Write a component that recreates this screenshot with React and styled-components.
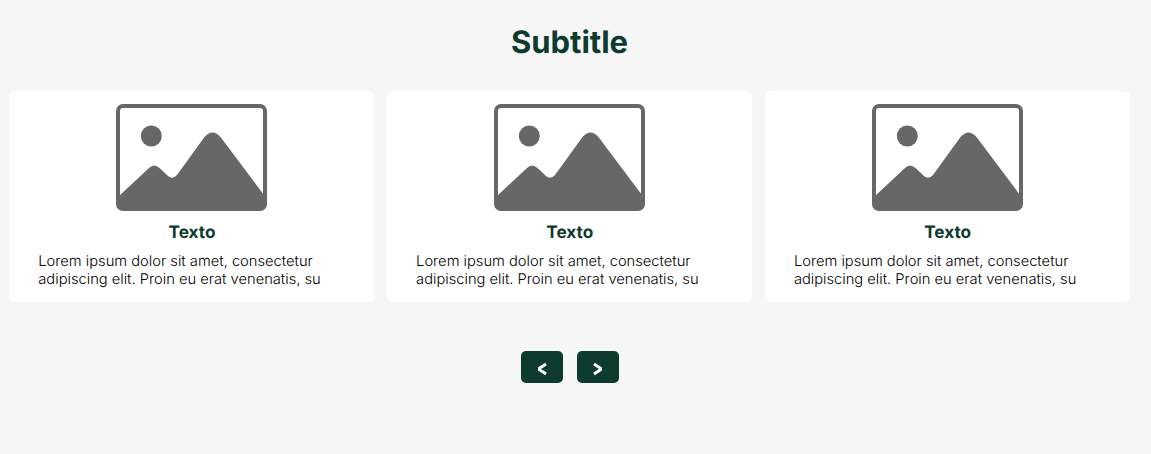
import React from "react";
import styled, { createGlobalStyle } from "styled-components";

const Global = createGlobalStyle`
  *{box-sizing:border-box}
  body{margin:0;background:#f6f6f6;font-family:Inter,"Liberation Sans",sans-serif;text-rendering:geometricPrecision}
`;
const Section = styled.section`
  height:454px;padding:23px 0 0 9px;background:#f6f6f6;overflow:hidden;
`;
const Title = styled.h2`
  margin:0;width:1121px;text-align:center;color:#0d3b2e;font-size:31px;line-height:40px;font-weight:700;
`;
const Cards = styled.div`
  display:grid;grid-template-columns:repeat(3,365px);gap:12.8px;margin-top:28px;
`;
const Card = styled.article`
  height:211px;background:#fff;border-radius:6px;padding-top:13px;
  display:flex;flex-direction:column;align-items:center;
`;
const Picture = styled.svg`
  display:block;width:151px;height:107px;flex:none;
`;
const CardTitle = styled.h3`
  margin:10px 0 0;padding-left:1px;font-size:17.2px;line-height:24px;font-weight:700;color:#0d3b2e;
`;
const Text = styled.p`
  margin:7px 0 0;padding-left:29.3px;width:100%;font-size:14.7px;line-height:18px;font-weight:300;color:#000;white-space:nowrap;
`;
const Nav = styled.div`
  display:flex;justify-content:center;gap:14px;width:1121px;margin-top:49px;
`;
const Arrow = styled.button`
  display:grid;place-items:center;width:42px;height:32px;border:0;border-radius:5px;padding:3px 0 0;background:#0d3b2e;color:#fff;
`;
const Chevron = styled.svg`
  display:block;width:10px;height:14px;fill:none;stroke:currentColor;stroke-width:3;
  transform:${(p) => (p.$next ? "scaleX(-1)" : "none")};
`;

const Placeholder = () => (
  <Picture viewBox="0 0 151 107">
    <rect x="2" y="2" width="147" height="103" rx="5" fill="#fff" stroke="#666867" strokeWidth="4" />
    <circle cx="35.3" cy="32" r="10.5" fill="#666867" />
    <path d="M3 92L33 64Q38 59 43.500 64L52 72Q56.500 76 61 71L88.500 33Q96.500 24 104.500 33L148 91V100Q148 105 143 105H8Q3 105 3 100Z" fill="#666867" />
  </Picture>
);

const ArrowButton = ({ next, label }) => (
  <Arrow aria-label={label}>
    <Chevron viewBox="0 0 10 14" $next={next}>
      <path d="M9 2L2.500 6.200V7.800L9 12" />
    </Chevron>
  </Arrow>
);

export default function App() {
  return (
    <Section>
      <Global />
      <Title>Subtitle</Title>
      <Cards>
        {[0, 1, 2].map((i) => (
          <Card key={i}>
            <Placeholder />
            <CardTitle>Texto</CardTitle>
            <Text>Lorem ipsum dolor sit amet, consectetur<br />adipiscing elit. Proin eu erat venenatis, su</Text>
          </Card>
        ))}
      </Cards>
      <Nav>
        <ArrowButton label="Anterior" />
        <ArrowButton label="Siguiente" next />
      </Nav>
    </Section>
  );
}
